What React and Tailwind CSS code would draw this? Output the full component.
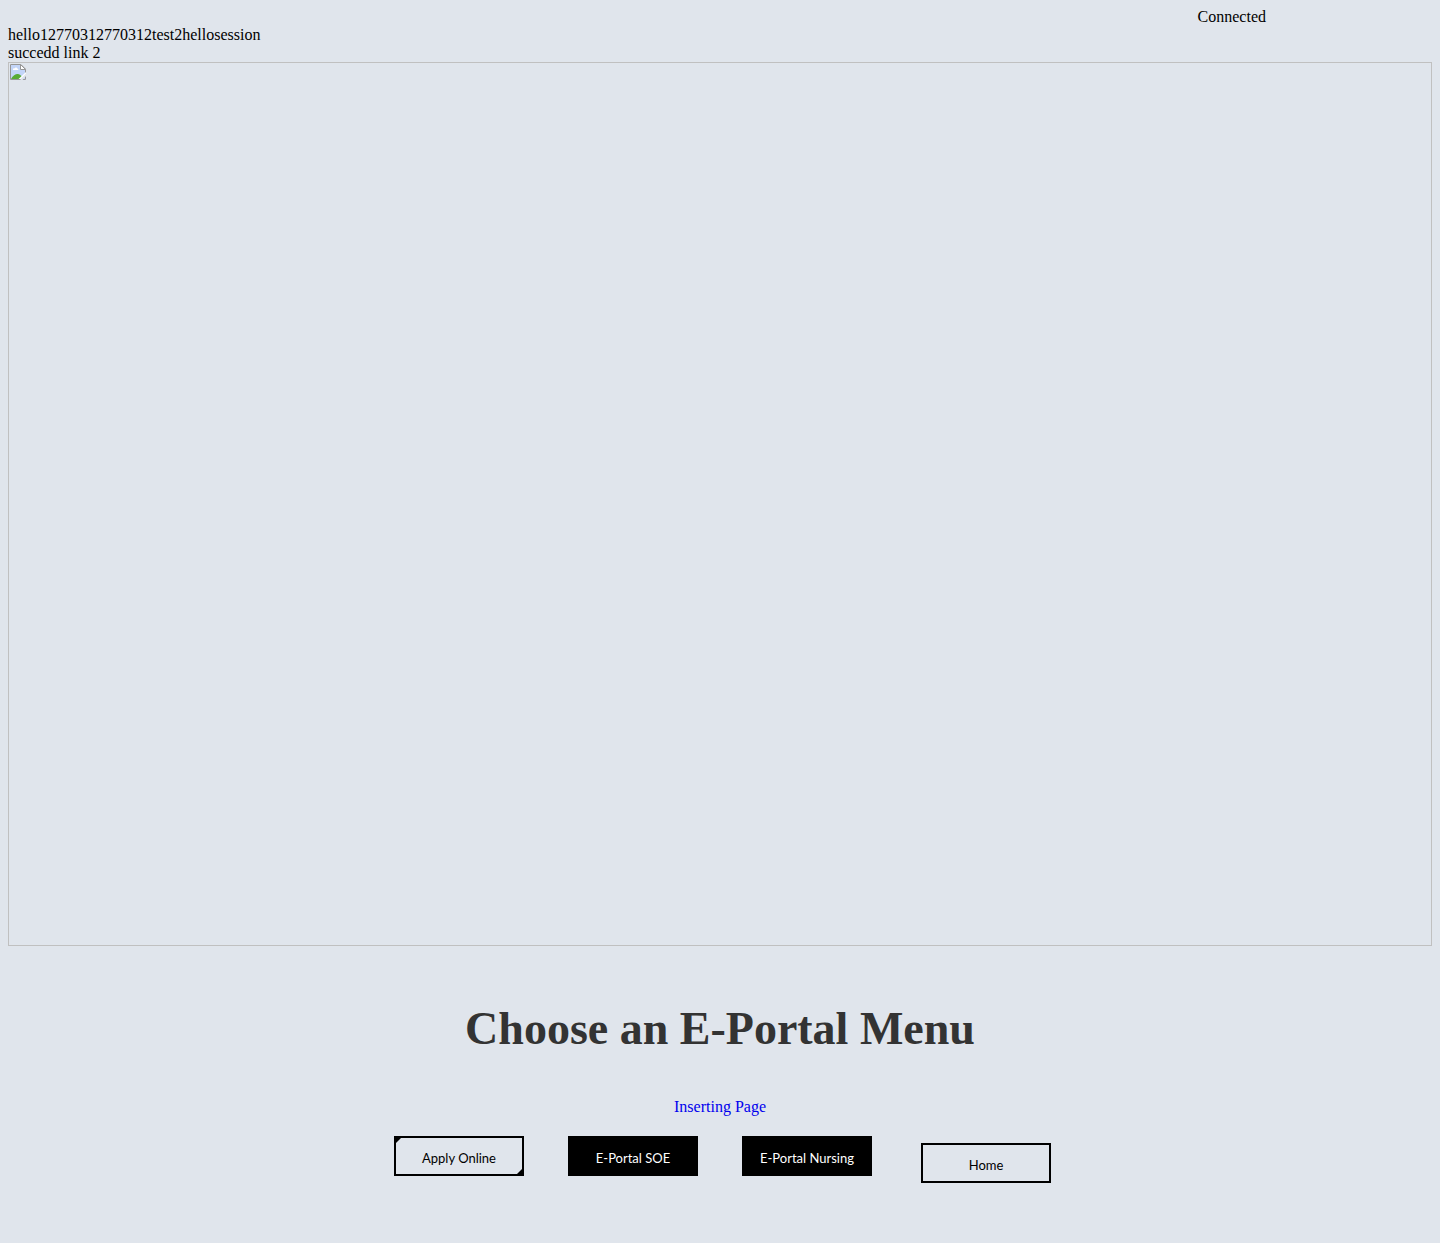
function MissingImage() {
  return (
    <div role="img" aria-label="Banner" className="aspect-[1424/884] w-full border border-[#c0c0c0] p-px">
      <svg width="16" height="16" viewBox="0 0 16 16" className="block" aria-hidden="true">
        <path d="M0.5 0.5H11L15.5 5V15.5H0.5Z" fill="#c3d5f8" stroke="#fff" />
        <path d="M1.5 1.5H10.5V5.5H14.5V14.5H1.5Z" fill="#c3d5f8" />
        <path d="M3 5.5C3 4.4 4 4 4.6 4.4C5 3 7 3.2 7.2 4.4C8.2 4.3 8.6 5.2 8.2 6H3Z" fill="#fff" />
        <path d="M1 15C3 11.5 5.5 9.8 8 10C10 10.3 12 12 13 15Z" fill="#58ab35" />
        <path d="M0.5 15.5V0.5H11L15.5 5V15.5Z" fill="none" stroke="#969696" />
        <path d="M10.5 0.5V5.5H15.5Z" fill="#fff" stroke="#969696" />
        <path d="M16 8L8.5 15H12L16 11.5Z" fill="#fff" />
        <path d="M16 9.5L10.5 15V16H12.5L16 12Z" fill="#e0e5ec" />
      </svg>
    </div>
  );
}

const buttonBase = "h-10 w-[130px] border-2 border-black pt-1 font-['Lato',sans-serif] text-[13px] leading-5";

export default function App() {
  return (
    <div className="min-h-screen bg-[#e0e5ec] p-2 font-['Liberation_Serif',serif] text-base leading-[18px] text-black">
      <header>
        <p className="pr-[166px] text-right">Connected</p>
        <p>hello12770312770312test2hellosession</p>
        <p>succedd link 2</p>
      </header>
      <MissingImage />
      <main className="flex flex-col items-center pb-14">
        <h1 className="mt-[53px] text-[46px] leading-[60px] font-bold text-[#333333]">Choose an E-Portal Menu</h1>
        <a href="#insert" className="mt-[39px] text-[#0000ee]">Inserting Page</a>
        <nav className="mt-5 ml-[5px] flex flex-wrap items-start gap-11">
          <button
            type="button"
            className={`${buttonBase} relative`}
          >
            <svg width="6" height="6" className="absolute top-0 left-0" aria-hidden="true">
              <path d="M0 0H5L0 5Z" />
            </svg>
            Apply Online
            <svg width="6" height="6" className="absolute right-0 bottom-0" aria-hidden="true">
              <path d="M6 6H1L6 1Z" />
            </svg>
          </button>
          <button type="button" className={`${buttonBase} bg-black text-white`}>E-Portal SOE</button>
          <button type="button" className={`${buttonBase} bg-black text-white`}>E-Portal Nursing</button>
          <button type="button" className={`${buttonBase} mt-[7px] ml-[5px]`}>Home</button>
        </nav>
      </main>
    </div>
  );
}
